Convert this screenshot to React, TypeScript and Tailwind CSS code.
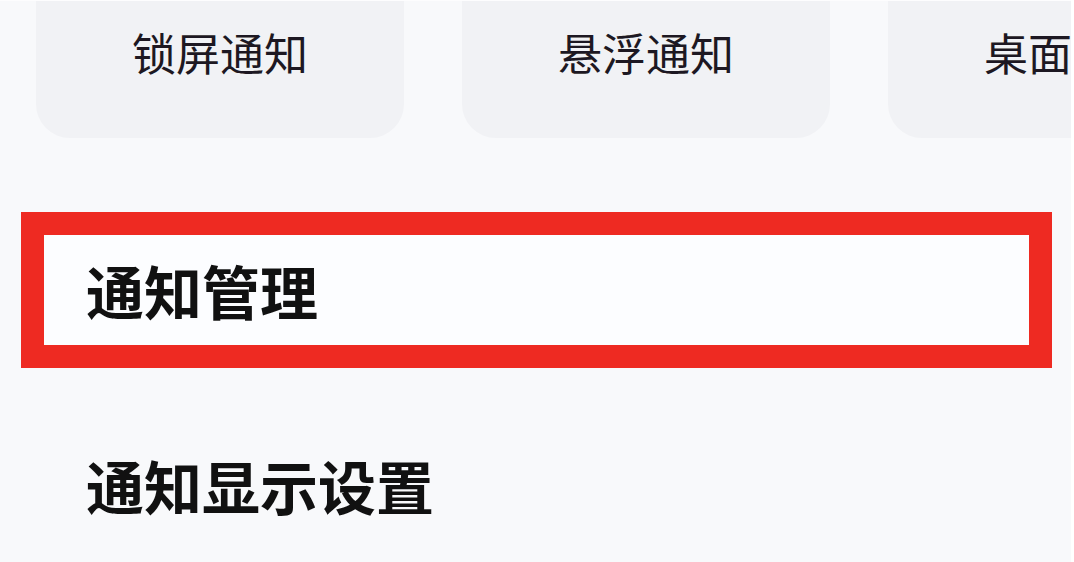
import React from "react";

const font = { fontFamily: '"Noto Sans CJK SC", "Noto Sans", sans-serif' };

export default function App() {
  const cards = ["锁屏通知", "悬浮通知", "桌面图标"];
  return (
    <div className="w-[1074px] h-[562px] overflow-hidden bg-white flex" style={font}>
      <div className="w-[1071px] h-[562px] overflow-hidden bg-[#f8f9fb] flex flex-col border-t border-[#fdfdfe]">
        <div className="flex gap-[58px] pl-[36px] shrink-0 -mt-px">
          {cards.map((c) => (
            <div
              key={c}
              className="w-[368px] h-[138px] shrink-0 rounded-b-[34px] bg-[#f1f2f5] flex justify-center pt-[30px]"
            >
              <span className="text-[44px] leading-none font-normal text-[#1d1822] whitespace-nowrap">
                {c}
              </span>
            </div>
          ))}
        </div>

        <div className="mt-[74px] ml-[21px] w-[1031px] h-[156px] shrink-0 border-[23px] border-[#ee2a22] bg-[#fcfdff] flex items-center pl-[42px]">
          <span className="text-[58px] leading-none font-semibold text-[#111111]">
            通知管理
          </span>
        </div>

        <div className="mt-[88px] pl-[86px]">
          <span className="text-[58px] leading-none font-semibold text-[#111111]">
            通知显示设置
          </span>
        </div>
      </div>
    </div>
  );
}
